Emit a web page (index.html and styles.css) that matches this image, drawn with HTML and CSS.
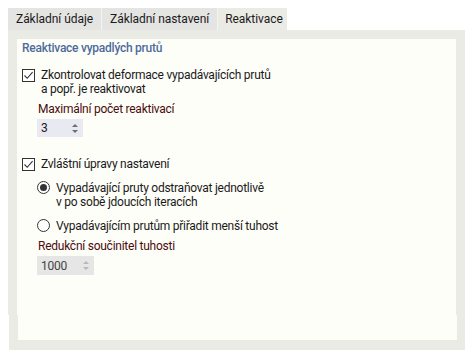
FILE: index.html
```html
<!DOCTYPE html>
<html lang="cs">
<head>
	<meta charset="UTF-8">
	<title>Reaktivace</title>
	<link rel="stylesheet" href="styles.css">
</head>
<body>
	<div class="dialog">
		<div class="tabs">
			<div class="tab">Základní údaje</div>
			<div class="tab">Základní nastavení</div>
			<div class="tab active">Reaktivace</div>
		</div>

		<div class="panel">
			<div class="content">
				<div class="heading">Reaktivace vypadlých prutů</div>

				<div class="check-row first">
					<span class="checkbox checked">
						<svg width="11" height="11" viewBox="0 0 11 11"><path d="M1.5 5.5 L4.2 8.3 L9.6 2.2" fill="none" stroke="#333" stroke-width="1.1"/></svg>
					</span>
					<span class="check-text">Zkontrolovat deformace vypadávajících prutů<br>a popř. je reaktivovat</span>
				</div>

				<div class="field-label">Maximální počet reaktivací</div>
				<div class="spin">
					<span class="spin-value">3</span>
					<span class="spin-arrows"><i class="up"></i><i class="down"></i></span>
				</div>

				<div class="check-row second">
					<span class="checkbox checked">
						<svg width="11" height="11" viewBox="0 0 11 11"><path d="M1.5 5.5 L4.2 8.3 L9.6 2.2" fill="none" stroke="#333" stroke-width="1.1"/></svg>
					</span>
					<span class="check-text">Zvláštní úpravy nastavení</span>
				</div>

				<div class="radio-row first">
					<span class="radio checked"></span>
					<span class="check-text">Vypadávající pruty odstraňovat jednotlivě<br>v po sobě jdoucích iteracích</span>
				</div>
				<div class="radio-row">
					<span class="radio"></span>
					<span class="check-text">Vypadávajícím prutům přiřadit menší tuhost</span>
				</div>

				<div class="field-label second">Redukční součinitel tuhosti</div>
				<div class="spin disabled">
					<span class="spin-value">1000</span>
					<span class="spin-arrows"><i class="up"></i><i class="down"></i></span>
				</div>
			</div>
		</div>

		<div class="footer">
			<div class="footer-inner"></div>
		</div>
	</div>
</body>
</html>
```

FILE: styles.css
```css
html, body {
	margin: 0;
	padding: 0;
	background: #fff;
	overflow: hidden;
}
body {
	font-family: Roboto, "Noto Sans", sans-serif;
	font-size: 12px;
	letter-spacing: -0.25px;
	color: #1a1a1a;
	width: 465px;
	height: 358px;
}
.dialog {
	padding: 8px 0 0 8px;
}
.tabs {
	display: flex;
	height: 22px;
}
.tab {
	padding: 0 8px;
	line-height: 22px;
	letter-spacing: -0.05px;
	background: #e4e4e2;
	border-right: 1px solid #f4f4f2;
	white-space: nowrap;
}
.tab.active {
	background: #ebebe6;
	border-right: none;
	padding: 0 4px 0 7px;
}
.panel {
	background: #ebebe6;
	padding: 9px 9px 0 9px;
	width: 439px;
}
.content {
	background: #fefef9;
	height: 276px;
	padding-left: 5px;
}
.heading {
	color: #4d6b99;
	font-weight: 500;
	line-height: 16px;
	padding-top: 1px;
}
.check-row {
	display: flex;
	align-items: flex-start;
	line-height: 14px;
}
.check-row.first {
	margin-top: 12px;
}
.check-row.second {
	margin-top: 20px;
}
.checkbox {
	flex: none;
	width: 11px;
	height: 11px;
	border: 1px solid #333;
	background: #fff;
	margin: 1px 6px 0 0;
	display: flex;
}
.check-text {
	white-space: nowrap;
}
.field-label {
	color: #4a0c0c;
	line-height: 14px;
	margin: 5px 0 0 16px;
	padding-top: 1px;
}
.spin {
	display: flex;
	align-items: center;
	justify-content: space-between;
	width: 38px;
	height: 18px;
	margin: 3px 0 0 15px;
	padding: 0 4px;
	background: #e9e9f1;
}
.spin.disabled {
	width: 49px;
	height: 19px;
	background: #e6e6e6;
	color: #444;
}
.spin-arrows {
	display: flex;
	flex-direction: column;
	gap: 3px;
	margin-right: 1px;
}
.spin-arrows i {
	display: block;
	width: 0;
	height: 0;
	border-left: 3px solid transparent;
	border-right: 3px solid transparent;
}
.spin-arrows .up {
	border-bottom: 3px solid #6e6e6e;
}
.spin-arrows .down {
	border-top: 3px solid #6e6e6e;
}
.spin.disabled .up {
	border-bottom-color: #b8b8b8;
}
.spin.disabled .down {
	border-top-color: #b8b8b8;
}
.radio-row {
	display: flex;
	align-items: flex-start;
	line-height: 14px;
	margin: 9px 0 0 15px;
}
.radio-row .check-text {
	padding-top: 1px;
}
.radio {
	flex: none;
	box-sizing: border-box;
	width: 13px;
	height: 13px;
	border: 1px solid #333;
	border-radius: 50%;
	background: #fff;
	margin: 1px 6px 0 0;
	position: relative;
}
.radio.checked::after {
	content: "";
	position: absolute;
	left: 2px;
	top: 2px;
	width: 7px;
	height: 7px;
	border-radius: 50%;
	background: #333;
}
.footer {
	margin-left: 1px;
	background: #ebebe6;
	padding: 0 9px 10px 9px;
	width: 439px;
}
.footer-inner {
	background: #fefef9;
	height: 25px;
}
```
